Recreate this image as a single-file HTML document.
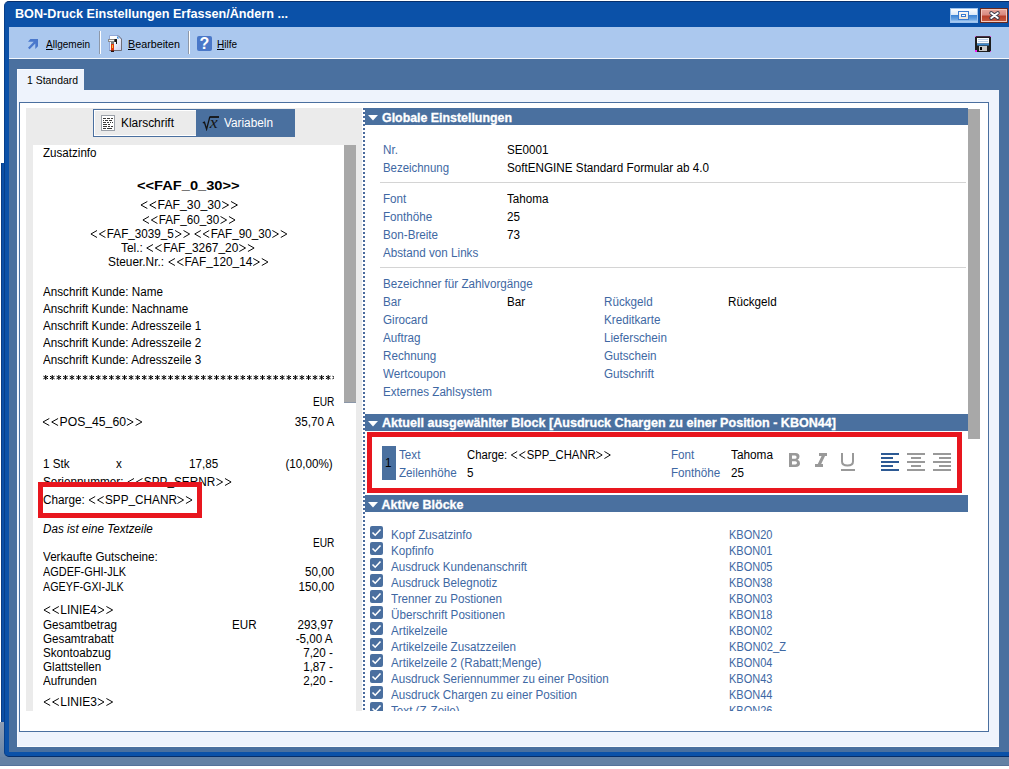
<!DOCTYPE html>
<html><head><meta charset="utf-8">
<style>
*{margin:0;padding:0;box-sizing:border-box}
html,body{width:1009px;height:769px;overflow:hidden;background:#fff;position:relative;font-family:"Liberation Sans",sans-serif;font-size:11px;color:#000}
.a{position:absolute}
.t{position:absolute;white-space:pre;line-height:14px}
.br{vertical-align:baseline;display:inline}
.us{position:relative;top:-1px}
u{text-decoration:underline;text-underline-offset:1px}
.cb{position:absolute;left:370px;width:13px;height:13px;background:#4a6f9f;border-radius:2px}
.cb svg{position:absolute;left:0;top:0}
</style></head><body>
<!-- background window pieces -->
<div class="a" style="left:0;top:722px;width:12px;height:36px;background:linear-gradient(#8e9eb4,#6884a6)"></div>
<div class="a" style="left:0;top:757px;width:1009px;height:9px;background:#6481a4"></div>
<div class="a" style="left:0;top:765px;width:1009px;height:1px;background:#56739a"></div>
<div class="a" style="left:1px;top:163px;width:4px;height:559px;background:#0b4fa6;border-left:1px solid #083c84"></div>

<!-- main window frame -->
<div class="a" style="left:4px;top:1px;width:1010px;height:756px;background:#0b51a8;border-radius:5px 0 0 5px;border-left:1px solid #073f8a;border-top:1px solid #062f6c;border-bottom:1px solid #062e6a"></div>

<!-- title buttons -->
<div class="a" style="left:950px;top:8px;width:28px;height:15px;border:1px solid #9cc2ee;background:linear-gradient(#fdfeff 0,#dce9f8 45%,#3f86d6 50%,#6aa4e2 80%,#b4d2f4 100%)"></div>
<div class="a" style="left:958px;top:11px;width:11px;height:9px;border:1px solid #3a7ad0;background:linear-gradient(#f8f8f8,#ece4d8)"></div>
<div class="a" style="left:961px;top:14px;width:5px;height:3px;border:1px solid #3a7ad0;background:#fff"></div>
<div class="a" style="left:980px;top:8px;width:28px;height:15px;border:1px solid #6a2a1e;background:linear-gradient(#e8a89c 0,#d88a80 45%,#b8402a 55%,#c85c40 100%);box-shadow:inset 0 0 0 1px #f4c8bc"></div>
<svg class="a" style="left:988px;top:10px" width="13" height="11" viewBox="0 0 13 11"><path d="M3.2 3 L9.8 8 M9.8 3 L3.2 8" stroke="#3a3a4a" stroke-width="3.8" stroke-linecap="round"/><path d="M3.2 3 L9.8 8 M9.8 3 L3.2 8" stroke="#fff" stroke-width="2" stroke-linecap="round"/></svg>

<!-- toolbar -->
<div class="a" style="left:9px;top:27px;width:1000px;height:31px;background:#abc8ee"></div>
<div class="a" style="left:9px;top:58px;width:1000px;height:1px;background:#f4f8fd"></div>
<svg class="a" style="left:27px;top:38px" width="12" height="12" viewBox="0 0 12 12"><path d="M3.4 1 L11 1 L11 8.3 L8.3 11 L8.3 5.6 L2.6 11.3 L1 9.7 L6.7 3.7 L1 3.7 Z" fill="#4a78cc"/></svg>
<div class="a" style="left:99px;top:31px;width:1px;height:23px;background:#8e98a8"></div>
<div class="a" style="left:100px;top:31px;width:1px;height:23px;background:#fff"></div>
<div class="a" style="left:188px;top:31px;width:1px;height:23px;background:#8e98a8"></div>
<div class="a" style="left:189px;top:31px;width:1px;height:23px;background:#fff"></div>
<!-- bearbeiten icon -->
<svg class="a" style="left:107px;top:34px" width="17" height="19" viewBox="0 0 17 19">
<defs><linearGradient id="dg" x1="0" y1="0" x2="1" y2="1"><stop offset="0.3" stop-color="#fff"/><stop offset="1" stop-color="#c4cdf0"/></linearGradient></defs>
<path d="M2.5 1.5 H11 L14.5 5 V16.5 H2.5 Z" fill="url(#dg)" stroke="#90a8d8"/>
<path d="M11 1.5 L14.5 5 V16.5 H2.5" fill="none" stroke="#6e6e78"/>
<path d="M10 2 L12.5 4.5 H10 Z" fill="#3a90e0"/>
<rect x="1" y="5" width="9" height="3" fill="#8a8a8a"/><rect x="2" y="6" width="5" height="1" fill="#f4f4f4"/>
<rect x="4" y="8" width="3" height="2" fill="#7a7a7a"/>
<path d="M7.5 5 H10 V10 H9 V8 H7.5 Z" fill="#151515"/>
<rect x="4" y="10" width="3" height="7" fill="#e2380e"/><rect x="5" y="11" width="1" height="3" fill="#f2c43a"/>
<rect x="4" y="16.5" width="3" height="1.5" fill="#201010"/>
</svg>
<!-- help icon -->
<div class="a" style="left:197px;top:36px;width:15px;height:15px;background:#4a78c8;border-radius:2px"></div>
<div class="a" style="left:197px;top:36px;width:15px;text-align:center;color:#fff;font:bold 16px/16px 'Liberation Sans',sans-serif">?</div>
<!-- save icon -->
<svg class="a" style="left:975px;top:36px" width="16" height="16" viewBox="0 0 16 16">
<rect x="0" y="0" width="16" height="16" fill="#1e1e1e"/>
<rect x="0" y="0" width="16" height="1" fill="#4a3048"/>
<rect x="2" y="2" width="12" height="5.5" fill="#fafcff"/>
<rect x="3" y="3" width="10" height="1" fill="#b8cfe8"/><rect x="3" y="5" width="10" height="1" fill="#b8cfe8"/>
<rect x="2" y="7.5" width="12" height="2" fill="#3c8ad0"/>
<rect x="4" y="10" width="8" height="5" fill="#c8c8c8"/>
<rect x="5" y="11" width="2" height="3" fill="#000"/>
<rect x="0" y="0" width="1" height="1" fill="#e040e0"/><rect x="15" y="0" width="1" height="1" fill="#e040e0"/><rect x="0" y="14" width="2" height="2" fill="#f020f0"/><rect x="15" y="15" width="1" height="1" fill="#e040e0"/>
</svg>

<!-- steel client -->
<div class="a" style="left:9px;top:59px;width:1000px;height:693px;background:#4a709f"></div>

<!-- tab -->
<div class="a" style="left:17px;top:69px;width:67px;height:22px;background:#eef3fc;border-top:1px solid #f8fbff;border-left:1px solid #f6f9ff"></div>
<!-- light page -->
<div class="a" style="left:17px;top:90px;width:982px;height:657px;background:#eef3fc;border-left:1px solid #f6f9ff"></div>
<div class="a" style="left:17px;top:746px;width:982px;height:1px;background:#fbfdff"></div>
<!-- inner bordered white box -->
<div class="a" style="left:19px;top:102px;width:970px;height:630px;background:#fff;border:1px solid #4a6f9f"></div>

<!-- left gray panel -->
<div class="a" style="left:26px;top:108px;width:336px;height:603px;background:#ebebeb"></div>
<div class="a" style="left:33px;top:145px;width:323px;height:566px;background:#fff"></div>
<div class="a" style="left:344px;top:145px;width:12px;height:258px;background:#a8a8a8;border-bottom:1px solid #8a96a8"></div>

<!-- klarschrift / variabeln buttons -->
<div class="a" style="left:93px;top:109px;width:103px;height:28px;border:1px solid #4a6f9f;border-right:none;box-shadow:inset 1px 1px 0 #fff, inset 0 -1px 0 #fff;background:#ebebeb"></div>
<div class="a" style="left:196px;top:109px;width:99px;height:28px;background:#4a709f"></div>
<svg class="a" style="left:101px;top:115px" width="14" height="16" viewBox="0 0 14 16">
<rect x="0.5" y="0.5" width="13" height="15" fill="#fff" stroke="#9aa0a8"/>
<g fill="#3a3a3a"><rect x="2" y="3" width="3" height="1"/><rect x="6" y="3" width="3" height="1"/><rect x="10" y="3" width="2" height="1"/>
<rect x="2" y="5" width="1" height="1"/><rect x="4" y="5" width="3" height="1"/><rect x="8" y="5" width="3" height="1"/>
<rect x="2" y="7" width="3" height="1"/><rect x="6" y="7" width="2" height="1"/><rect x="9" y="7" width="1" height="1"/><rect x="11" y="7" width="1" height="1"/>
<rect x="2" y="9" width="4" height="1"/><rect x="7" y="9" width="2" height="1"/>
<rect x="2" y="11" width="4" height="1"/><rect x="7" y="11" width="2" height="1"/><rect x="10" y="11" width="2" height="1"/>
<rect x="2" y="13" width="3" height="1"/><rect x="6" y="13" width="5" height="1"/></g>
</svg>
<svg class="a" style="left:202px;top:114px" width="18" height="17" viewBox="0 0 18 17">
<path d="M0.8 8.8 L2.4 8.2 L4.6 15.2 L7.8 2.8" fill="none" stroke="#141414" stroke-width="1.3"/>
<path d="M7.6 3 H17" fill="none" stroke="#141414" stroke-width="1.8"/>
<text x="7.2" y="14.2" font-family="Liberation Serif" font-style="italic" font-size="16.5" fill="#141414" transform="scale(1.08,1)">x</text>
</svg>

<!-- splitter -->
<div class="a" style="left:363px;top:108px;width:2px;height:603px;background:repeating-linear-gradient(#4a6a9c 0 2px,transparent 2px 4px)"></div>

<!-- right panel headers -->
<div class="a" style="left:365px;top:108px;width:603px;height:17px;background:#4a709f"></div>
<div class="a" style="left:365px;top:414px;width:603px;height:17px;background:#4a709f"></div>
<div class="a" style="left:365px;top:495px;width:603px;height:17px;background:#4a709f"></div>
<svg class="a" style="left:368px;top:115px" width="11" height="6"><path d="M0 0 H10 L5 5.5 Z" fill="#fff"/></svg>
<svg class="a" style="left:368px;top:421px" width="11" height="6"><path d="M0 0 H10 L5 5.5 Z" fill="#fff"/></svg>
<svg class="a" style="left:368px;top:502px" width="11" height="6"><path d="M0 0 H10 L5 5.5 Z" fill="#fff"/></svg>
<div class="a" style="left:968px;top:109px;width:12px;height:330px;background:#a8a8a8"></div>
<!-- separators -->
<div class="a" style="left:380px;top:182px;width:586px;height:1px;background:#d4d4d4"></div>
<div class="a" style="left:380px;top:267px;width:586px;height:1px;background:#d4d4d4"></div>

<!-- red boxes -->
<div class="a" style="left:367px;top:432px;width:595px;height:61px;border:5px solid #e8161e"></div>
<div class="a" style="left:382px;top:446px;width:14px;height:34px;background:#4a709f"></div>
<!-- B I U -->
<svg class="a" style="left:786px;top:450px" width="72" height="24" viewBox="0 0 72 24" fill="#999">
<path d="M3 3 H9.5 Q13.5 3 13.5 6.5 Q13.5 8.8 11.5 9.7 Q14 10.5 14 13.2 Q14 17 9.5 17 H3 Z M6 5.6 V8.8 H9 Q10.6 8.8 10.6 7.2 Q10.6 5.6 9 5.6 Z M6 11.2 V14.4 H9.3 Q11 14.4 11 12.8 Q11 11.2 9.3 11.2 Z" fill-rule="evenodd"/>
<path d="M33 3 H41 V6 H39 L35.2 14 H37 V17 H29 V14 H31.8 L35.6 6 H33 Z"/>
<path d="M56 3 V11.5 Q56 15.5 61.5 15.5 Q67 15.5 67 11.5 V3" fill="none" stroke="#999" stroke-width="2"/>
<rect x="55" y="19" width="14" height="2"/>
</svg>
<svg class="a" style="left:880px;top:452px" width="72" height="20" viewBox="0 0 72 20">
<g fill="#2d5a94"><rect x="1" y="1" width="18" height="2"/><rect x="1" y="5" width="12" height="2"/><rect x="1" y="9" width="18" height="2"/><rect x="1" y="13" width="12" height="2"/><rect x="1" y="17" width="18" height="2"/></g>
<g fill="#999"><rect x="27" y="1" width="18" height="2"/><rect x="31" y="5" width="10" height="2"/><rect x="27" y="9" width="18" height="2"/><rect x="31" y="13" width="10" height="2"/><rect x="27" y="17" width="18" height="2"/>
<rect x="53" y="1" width="18" height="2"/><rect x="59" y="5" width="12" height="2"/><rect x="53" y="9" width="18" height="2"/><rect x="59" y="13" width="12" height="2"/><rect x="53" y="17" width="18" height="2"/></g>
</svg>

<!-- checkboxes -->
<div class="a" style="left:365px;top:512px;width:603px;height:199px;overflow:hidden">
<div class="cb" style="left:5px;top:14px"><svg width="13" height="13"><path d="M2.5 6.5 L5.2 9.2 L10.5 3.5" fill="none" stroke="#fff" stroke-width="1.6"/></svg></div>
<div class="cb" style="left:5px;top:30px"><svg width="13" height="13"><path d="M2.5 6.5 L5.2 9.2 L10.5 3.5" fill="none" stroke="#fff" stroke-width="1.6"/></svg></div>
<div class="cb" style="left:5px;top:46px"><svg width="13" height="13"><path d="M2.5 6.5 L5.2 9.2 L10.5 3.5" fill="none" stroke="#fff" stroke-width="1.6"/></svg></div>
<div class="cb" style="left:5px;top:62px"><svg width="13" height="13"><path d="M2.5 6.5 L5.2 9.2 L10.5 3.5" fill="none" stroke="#fff" stroke-width="1.6"/></svg></div>
<div class="cb" style="left:5px;top:78px"><svg width="13" height="13"><path d="M2.5 6.5 L5.2 9.2 L10.5 3.5" fill="none" stroke="#fff" stroke-width="1.6"/></svg></div>
<div class="cb" style="left:5px;top:94px"><svg width="13" height="13"><path d="M2.5 6.5 L5.2 9.2 L10.5 3.5" fill="none" stroke="#fff" stroke-width="1.6"/></svg></div>
<div class="cb" style="left:5px;top:110px"><svg width="13" height="13"><path d="M2.5 6.5 L5.2 9.2 L10.5 3.5" fill="none" stroke="#fff" stroke-width="1.6"/></svg></div>
<div class="cb" style="left:5px;top:126px"><svg width="13" height="13"><path d="M2.5 6.5 L5.2 9.2 L10.5 3.5" fill="none" stroke="#fff" stroke-width="1.6"/></svg></div>
<div class="cb" style="left:5px;top:142px"><svg width="13" height="13"><path d="M2.5 6.5 L5.2 9.2 L10.5 3.5" fill="none" stroke="#fff" stroke-width="1.6"/></svg></div>
<div class="cb" style="left:5px;top:158px"><svg width="13" height="13"><path d="M2.5 6.5 L5.2 9.2 L10.5 3.5" fill="none" stroke="#fff" stroke-width="1.6"/></svg></div>
<div class="cb" style="left:5px;top:174px"><svg width="13" height="13"><path d="M2.5 6.5 L5.2 9.2 L10.5 3.5" fill="none" stroke="#fff" stroke-width="1.6"/></svg></div>
<div class="cb" style="left:5px;top:190px"><svg width="13" height="13"><path d="M2.5 6.5 L5.2 9.2 L10.5 3.5" fill="none" stroke="#fff" stroke-width="1.6"/></svg></div>
</div>

<svg class="a" style="left:0;top:0" width="334" height="400"><path d="M45.70 375 V380 M43.40 376.2 L48.00 378.8 M43.40 378.8 L48.00 376.2 M52.27 375 V380 M49.97 376.2 L54.57 378.8 M49.97 378.8 L54.57 376.2 M58.84 375 V380 M56.54 376.2 L61.14 378.8 M56.54 378.8 L61.14 376.2 M65.41 375 V380 M63.11 376.2 L67.71 378.8 M63.11 378.8 L67.71 376.2 M71.98 375 V380 M69.68 376.2 L74.28 378.8 M69.68 378.8 L74.28 376.2 M78.55 375 V380 M76.25 376.2 L80.85 378.8 M76.25 378.8 L80.85 376.2 M85.12 375 V380 M82.82 376.2 L87.42 378.8 M82.82 378.8 L87.42 376.2 M91.69 375 V380 M89.39 376.2 L93.99 378.8 M89.39 378.8 L93.99 376.2 M98.26 375 V380 M95.96 376.2 L100.56 378.8 M95.96 378.8 L100.56 376.2 M104.83 375 V380 M102.53 376.2 L107.13 378.8 M102.53 378.8 L107.13 376.2 M111.40 375 V380 M109.10 376.2 L113.70 378.8 M109.10 378.8 L113.70 376.2 M117.97 375 V380 M115.67 376.2 L120.27 378.8 M115.67 378.8 L120.27 376.2 M124.54 375 V380 M122.24 376.2 L126.84 378.8 M122.24 378.8 L126.84 376.2 M131.11 375 V380 M128.81 376.2 L133.41 378.8 M128.81 378.8 L133.41 376.2 M137.68 375 V380 M135.38 376.2 L139.98 378.8 M135.38 378.8 L139.98 376.2 M144.25 375 V380 M141.95 376.2 L146.55 378.8 M141.95 378.8 L146.55 376.2 M150.82 375 V380 M148.52 376.2 L153.12 378.8 M148.52 378.8 L153.12 376.2 M157.39 375 V380 M155.09 376.2 L159.69 378.8 M155.09 378.8 L159.69 376.2 M163.96 375 V380 M161.66 376.2 L166.26 378.8 M161.66 378.8 L166.26 376.2 M170.53 375 V380 M168.23 376.2 L172.83 378.8 M168.23 378.8 L172.83 376.2 M177.10 375 V380 M174.80 376.2 L179.40 378.8 M174.80 378.8 L179.40 376.2 M183.67 375 V380 M181.37 376.2 L185.97 378.8 M181.37 378.8 L185.97 376.2 M190.24 375 V380 M187.94 376.2 L192.54 378.8 M187.94 378.8 L192.54 376.2 M196.81 375 V380 M194.51 376.2 L199.11 378.8 M194.51 378.8 L199.11 376.2 M203.38 375 V380 M201.08 376.2 L205.68 378.8 M201.08 378.8 L205.68 376.2 M209.95 375 V380 M207.65 376.2 L212.25 378.8 M207.65 378.8 L212.25 376.2 M216.52 375 V380 M214.22 376.2 L218.82 378.8 M214.22 378.8 L218.82 376.2 M223.09 375 V380 M220.79 376.2 L225.39 378.8 M220.79 378.8 L225.39 376.2 M229.66 375 V380 M227.36 376.2 L231.96 378.8 M227.36 378.8 L231.96 376.2 M236.23 375 V380 M233.93 376.2 L238.53 378.8 M233.93 378.8 L238.53 376.2 M242.80 375 V380 M240.50 376.2 L245.10 378.8 M240.50 378.8 L245.10 376.2 M249.37 375 V380 M247.07 376.2 L251.67 378.8 M247.07 378.8 L251.67 376.2 M255.94 375 V380 M253.64 376.2 L258.24 378.8 M253.64 378.8 L258.24 376.2 M262.51 375 V380 M260.21 376.2 L264.81 378.8 M260.21 378.8 L264.81 376.2 M269.08 375 V380 M266.78 376.2 L271.38 378.8 M266.78 378.8 L271.38 376.2 M275.65 375 V380 M273.35 376.2 L277.95 378.8 M273.35 378.8 L277.95 376.2 M282.22 375 V380 M279.92 376.2 L284.52 378.8 M279.92 378.8 L284.52 376.2 M288.79 375 V380 M286.49 376.2 L291.09 378.8 M286.49 378.8 L291.09 376.2 M295.36 375 V380 M293.06 376.2 L297.66 378.8 M293.06 378.8 L297.66 376.2 M301.93 375 V380 M299.63 376.2 L304.23 378.8 M299.63 378.8 L304.23 376.2 M308.50 375 V380 M306.20 376.2 L310.80 378.8 M306.20 378.8 L310.80 376.2 M315.07 375 V380 M312.77 376.2 L317.37 378.8 M312.77 378.8 L317.37 376.2 M321.64 375 V380 M319.34 376.2 L323.94 378.8 M319.34 378.8 L323.94 376.2 M328.21 375 V380 M325.91 376.2 L330.51 378.8 M325.91 378.8 L330.51 376.2 M334.78 375 V380 M332.48 376.2 L337.08 378.8 M332.48 378.8 L337.08 376.2" stroke="#000" stroke-width="1" fill="none"/></svg>
<div class="t" id="t0" style="top:6.5px;font:bold 13px/14px 'Liberation Sans',sans-serif;color:#fff;left:15px;transform:scaleX(0.9715);transform-origin:left top;">BON-Druck Einstellungen Erfassen/Ändern ...</div>
<div class="t" id="t1" style="top:37px;font:11px/14px 'Liberation Sans',sans-serif;color:#000;left:46px;transform:scaleX(0.9107);transform-origin:left top;"><u>A</u>llgemein</div>
<div class="t" id="t2" style="top:37px;font:11px/14px 'Liberation Sans',sans-serif;color:#000;left:127.5px;transform:scaleX(0.9771);transform-origin:left top;"><u>B</u>earbeiten</div>
<div class="t" id="t3" style="top:37px;font:11px/14px 'Liberation Sans',sans-serif;color:#000;left:217px;transform:scaleX(0.9084);transform-origin:left top;"><u>H</u>ilfe</div>
<div class="t" id="t4" style="top:73px;font:11px/14px 'Liberation Sans',sans-serif;color:#000;left:27px;transform:scaleX(0.9475);transform-origin:left top;">1 Standard</div>
<div class="t" id="t5" style="top:116px;font:12.5px/14px 'Liberation Sans',sans-serif;color:#000;left:121px;transform:scaleX(0.9536);transform-origin:left top;">Klarschrift</div>
<div class="t" id="t6" style="top:116px;font:12.5px/14px 'Liberation Sans',sans-serif;color:#fff;left:224px;transform:scaleX(0.9443);transform-origin:left top;">Variabeln</div>
<div class="t" id="t7" style="top:146px;font:12.5px/14px 'Liberation Sans',sans-serif;color:#000;left:43px;transform:scaleX(0.9277);transform-origin:left top;">Zusatzinfo</div>
<div class="t" id="t8" style="top:179px;font:bold 12.5px/14px 'Liberation Sans',sans-serif;color:#000;left:137px;transform:scaleX(1.1713);transform-origin:left top;">&lt;&lt;FAF<span class="us">_</span>0<span class="us">_</span>30&gt;&gt;</div>
<div class="t" id="t9" style="top:198px;font:12.5px/14px 'Liberation Sans',sans-serif;color:#000;left:139.6px;transform:scaleX(0.9787);transform-origin:left top;"><svg class="br" width="9" height="9"><path d="M7.5 1.5 L1 5 L7.5 8.5" fill="none" stroke="currentColor" stroke-width="1"/></svg><svg class="br" width="9" height="9"><path d="M7.5 1.5 L1 5 L7.5 8.5" fill="none" stroke="currentColor" stroke-width="1"/></svg>FAF<span class="us">_</span>30<span class="us">_</span>30<svg class="br" width="9" height="9"><path d="M1 1.5 L7.5 5 L1 8.5" fill="none" stroke="currentColor" stroke-width="1"/></svg><svg class="br" width="9" height="9"><path d="M1 1.5 L7.5 5 L1 8.5" fill="none" stroke="currentColor" stroke-width="1"/></svg></div>
<div class="t" id="t10" style="top:213px;font:12.5px/14px 'Liberation Sans',sans-serif;color:#000;left:141.8px;transform:scaleX(0.9350);transform-origin:left top;"><svg class="br" width="9" height="9"><path d="M7.5 1.5 L1 5 L7.5 8.5" fill="none" stroke="currentColor" stroke-width="1"/></svg><svg class="br" width="9" height="9"><path d="M7.5 1.5 L1 5 L7.5 8.5" fill="none" stroke="currentColor" stroke-width="1"/></svg>FAF<span class="us">_</span>60<span class="us">_</span>30<svg class="br" width="9" height="9"><path d="M1 1.5 L7.5 5 L1 8.5" fill="none" stroke="currentColor" stroke-width="1"/></svg><svg class="br" width="9" height="9"><path d="M1 1.5 L7.5 5 L1 8.5" fill="none" stroke="currentColor" stroke-width="1"/></svg></div>
<div class="t" id="t11" style="top:227px;font:12.5px/14px 'Liberation Sans',sans-serif;color:#000;left:89.5px;transform:scaleX(0.9352);transform-origin:left top;"><svg class="br" width="9" height="9"><path d="M7.5 1.5 L1 5 L7.5 8.5" fill="none" stroke="currentColor" stroke-width="1"/></svg><svg class="br" width="9" height="9"><path d="M7.5 1.5 L1 5 L7.5 8.5" fill="none" stroke="currentColor" stroke-width="1"/></svg>FAF<span class="us">_</span>3039<span class="us">_</span>5<svg class="br" width="9" height="9"><path d="M1 1.5 L7.5 5 L1 8.5" fill="none" stroke="currentColor" stroke-width="1"/></svg><svg class="br" width="9" height="9"><path d="M1 1.5 L7.5 5 L1 8.5" fill="none" stroke="currentColor" stroke-width="1"/></svg> <svg class="br" width="9" height="9"><path d="M7.5 1.5 L1 5 L7.5 8.5" fill="none" stroke="currentColor" stroke-width="1"/></svg><svg class="br" width="9" height="9"><path d="M7.5 1.5 L1 5 L7.5 8.5" fill="none" stroke="currentColor" stroke-width="1"/></svg>FAF<span class="us">_</span>90<span class="us">_</span>30<svg class="br" width="9" height="9"><path d="M1 1.5 L7.5 5 L1 8.5" fill="none" stroke="currentColor" stroke-width="1"/></svg><svg class="br" width="9" height="9"><path d="M1 1.5 L7.5 5 L1 8.5" fill="none" stroke="currentColor" stroke-width="1"/></svg></div>
<div class="t" id="t12" style="top:241px;font:12.5px/14px 'Liberation Sans',sans-serif;color:#000;left:121.4px;transform:scaleX(0.9542);transform-origin:left top;">Tel.: <svg class="br" width="9" height="9"><path d="M7.5 1.5 L1 5 L7.5 8.5" fill="none" stroke="currentColor" stroke-width="1"/></svg><svg class="br" width="9" height="9"><path d="M7.5 1.5 L1 5 L7.5 8.5" fill="none" stroke="currentColor" stroke-width="1"/></svg>FAF<span class="us">_</span>3267<span class="us">_</span>20<svg class="br" width="9" height="9"><path d="M1 1.5 L7.5 5 L1 8.5" fill="none" stroke="currentColor" stroke-width="1"/></svg><svg class="br" width="9" height="9"><path d="M1 1.5 L7.5 5 L1 8.5" fill="none" stroke="currentColor" stroke-width="1"/></svg></div>
<div class="t" id="t13" style="top:255px;font:12.5px/14px 'Liberation Sans',sans-serif;color:#000;left:108px;transform:scaleX(0.9493);transform-origin:left top;">Steuer.Nr.: <svg class="br" width="9" height="9"><path d="M7.5 1.5 L1 5 L7.5 8.5" fill="none" stroke="currentColor" stroke-width="1"/></svg><svg class="br" width="9" height="9"><path d="M7.5 1.5 L1 5 L7.5 8.5" fill="none" stroke="currentColor" stroke-width="1"/></svg>FAF<span class="us">_</span>120<span class="us">_</span>14<svg class="br" width="9" height="9"><path d="M1 1.5 L7.5 5 L1 8.5" fill="none" stroke="currentColor" stroke-width="1"/></svg><svg class="br" width="9" height="9"><path d="M1 1.5 L7.5 5 L1 8.5" fill="none" stroke="currentColor" stroke-width="1"/></svg></div>
<div class="t" id="t14" style="top:285px;font:12.5px/14px 'Liberation Sans',sans-serif;color:#000;left:43px;transform:scaleX(0.9328);transform-origin:left top;">Anschrift Kunde: Name</div>
<div class="t" id="t15" style="top:302px;font:12.5px/14px 'Liberation Sans',sans-serif;color:#000;left:43px;transform:scaleX(0.9328);transform-origin:left top;">Anschrift Kunde: Nachname</div>
<div class="t" id="t16" style="top:319px;font:12.5px/14px 'Liberation Sans',sans-serif;color:#000;left:43px;transform:scaleX(0.9328);transform-origin:left top;">Anschrift Kunde: Adresszeile 1</div>
<div class="t" id="t17" style="top:336px;font:12.5px/14px 'Liberation Sans',sans-serif;color:#000;left:43px;transform:scaleX(0.9328);transform-origin:left top;">Anschrift Kunde: Adresszeile 2</div>
<div class="t" id="t18" style="top:353px;font:12.5px/14px 'Liberation Sans',sans-serif;color:#000;left:43px;transform:scaleX(0.9328);transform-origin:left top;">Anschrift Kunde: Adresszeile 3</div>
<div class="t" id="t19" style="top:395px;font:12.5px/14px 'Liberation Sans',sans-serif;color:#000;right:675px;transform:scaleX(0.8142);transform-origin:right top;">EUR</div>
<div class="t" id="t20" style="top:415px;font:12.5px/14px 'Liberation Sans',sans-serif;color:#000;left:42px;transform:scaleX(0.9748);transform-origin:left top;"><svg class="br" width="9" height="9"><path d="M7.5 1.5 L1 5 L7.5 8.5" fill="none" stroke="currentColor" stroke-width="1"/></svg><svg class="br" width="9" height="9"><path d="M7.5 1.5 L1 5 L7.5 8.5" fill="none" stroke="currentColor" stroke-width="1"/></svg>POS<span class="us">_</span>45<span class="us">_</span>60<svg class="br" width="9" height="9"><path d="M1 1.5 L7.5 5 L1 8.5" fill="none" stroke="currentColor" stroke-width="1"/></svg><svg class="br" width="9" height="9"><path d="M1 1.5 L7.5 5 L1 8.5" fill="none" stroke="currentColor" stroke-width="1"/></svg></div>
<div class="t" id="t21" style="top:415px;font:12.5px/14px 'Liberation Sans',sans-serif;color:#000;right:675px;transform:scaleX(0.9328);transform-origin:right top;">35,70 A</div>
<div class="t" id="t22" style="top:457px;font:12.5px/14px 'Liberation Sans',sans-serif;color:#000;left:43px;transform:scaleX(0.9328);transform-origin:left top;">1 Stk</div>
<div class="t" id="t23" style="top:457px;font:12.5px/14px 'Liberation Sans',sans-serif;color:#000;left:116px;transform:scaleX(0.9328);transform-origin:left top;">x</div>
<div class="t" id="t24" style="top:457px;font:12.5px/14px 'Liberation Sans',sans-serif;color:#000;left:189px;transform:scaleX(0.9328);transform-origin:left top;">17,85</div>
<div class="t" id="t25" style="top:457px;font:12.5px/14px 'Liberation Sans',sans-serif;color:#000;right:676px;transform:scaleX(0.9328);transform-origin:right top;">(10,00%)</div>
<div class="t" id="t26" style="top:475px;font:12.5px/14px 'Liberation Sans',sans-serif;color:#000;left:43px;transform:scaleX(0.9429);transform-origin:left top;">Seriennummer: <svg class="br" width="9" height="9"><path d="M7.5 1.5 L1 5 L7.5 8.5" fill="none" stroke="currentColor" stroke-width="1"/></svg><svg class="br" width="9" height="9"><path d="M7.5 1.5 L1 5 L7.5 8.5" fill="none" stroke="currentColor" stroke-width="1"/></svg>SPP<span class="us">_</span>SERNR<svg class="br" width="9" height="9"><path d="M1 1.5 L7.5 5 L1 8.5" fill="none" stroke="currentColor" stroke-width="1"/></svg><svg class="br" width="9" height="9"><path d="M1 1.5 L7.5 5 L1 8.5" fill="none" stroke="currentColor" stroke-width="1"/></svg></div>
<div class="t" id="t27" style="top:493px;font:12.5px/14px 'Liberation Sans',sans-serif;color:#000;left:43.4px;transform:scaleX(0.9403);transform-origin:left top;">Charge: <svg class="br" width="9" height="9"><path d="M7.5 1.5 L1 5 L7.5 8.5" fill="none" stroke="currentColor" stroke-width="1"/></svg><svg class="br" width="9" height="9"><path d="M7.5 1.5 L1 5 L7.5 8.5" fill="none" stroke="currentColor" stroke-width="1"/></svg>SPP<span class="us">_</span>CHANR<svg class="br" width="9" height="9"><path d="M1 1.5 L7.5 5 L1 8.5" fill="none" stroke="currentColor" stroke-width="1"/></svg><svg class="br" width="9" height="9"><path d="M1 1.5 L7.5 5 L1 8.5" fill="none" stroke="currentColor" stroke-width="1"/></svg></div>
<div class="t" id="t28" style="top:522px;font:italic 12.5px/14px 'Liberation Sans',sans-serif;color:#000;left:43px;transform:scaleX(0.9328);transform-origin:left top;">Das ist eine Textzeile</div>
<div class="t" id="t29" style="top:536px;font:12.5px/14px 'Liberation Sans',sans-serif;color:#000;right:675px;transform:scaleX(0.8142);transform-origin:right top;">EUR</div>
<div class="t" id="t30" style="top:550px;font:12.5px/14px 'Liberation Sans',sans-serif;color:#000;left:43px;transform:scaleX(0.9328);transform-origin:left top;">Verkaufte Gutscheine:</div>
<div class="t" id="t31" style="top:565px;font:12.5px/14px 'Liberation Sans',sans-serif;color:#000;left:43px;transform:scaleX(0.8722);transform-origin:left top;">AGDEF-GHI-JLK</div>
<div class="t" id="t32" style="top:565px;font:12.5px/14px 'Liberation Sans',sans-serif;color:#000;right:675px;transform:scaleX(0.9328);transform-origin:right top;">50,00</div>
<div class="t" id="t33" style="top:580px;font:12.5px/14px 'Liberation Sans',sans-serif;color:#000;left:43px;transform:scaleX(0.8605);transform-origin:left top;">AGEYF-GXI-JLK</div>
<div class="t" id="t34" style="top:580px;font:12.5px/14px 'Liberation Sans',sans-serif;color:#000;right:675px;transform:scaleX(0.9328);transform-origin:right top;">150,00</div>
<div class="t" id="t35" style="top:603px;font:12.5px/14px 'Liberation Sans',sans-serif;color:#000;left:43px;transform:scaleX(0.9606);transform-origin:left top;"><svg class="br" width="9" height="9"><path d="M7.5 1.5 L1 5 L7.5 8.5" fill="none" stroke="currentColor" stroke-width="1"/></svg><svg class="br" width="9" height="9"><path d="M7.5 1.5 L1 5 L7.5 8.5" fill="none" stroke="currentColor" stroke-width="1"/></svg>LINIE4<svg class="br" width="9" height="9"><path d="M1 1.5 L7.5 5 L1 8.5" fill="none" stroke="currentColor" stroke-width="1"/></svg><svg class="br" width="9" height="9"><path d="M1 1.5 L7.5 5 L1 8.5" fill="none" stroke="currentColor" stroke-width="1"/></svg></div>
<div class="t" id="t36" style="top:618px;font:12.5px/14px 'Liberation Sans',sans-serif;color:#000;left:43px;transform:scaleX(0.9328);transform-origin:left top;">Gesamtbetrag</div>
<div class="t" id="t37" style="top:618px;font:12.5px/14px 'Liberation Sans',sans-serif;color:#000;left:232px;transform:scaleX(0.9328);transform-origin:left top;">EUR</div>
<div class="t" id="t38" style="top:618px;font:12.5px/14px 'Liberation Sans',sans-serif;color:#000;right:676px;transform:scaleX(0.9328);transform-origin:right top;">293,97</div>
<div class="t" id="t39" style="top:632px;font:12.5px/14px 'Liberation Sans',sans-serif;color:#000;left:43px;transform:scaleX(0.9328);transform-origin:left top;">Gesamtrabatt</div>
<div class="t" id="t40" style="top:632px;font:12.5px/14px 'Liberation Sans',sans-serif;color:#000;right:676px;transform:scaleX(0.9328);transform-origin:right top;">-5,00 A</div>
<div class="t" id="t41" style="top:646px;font:12.5px/14px 'Liberation Sans',sans-serif;color:#000;left:43px;transform:scaleX(0.9328);transform-origin:left top;">Skontoabzug</div>
<div class="t" id="t42" style="top:646px;font:12.5px/14px 'Liberation Sans',sans-serif;color:#000;right:676px;transform:scaleX(0.9328);transform-origin:right top;">7,20 -</div>
<div class="t" id="t43" style="top:660px;font:12.5px/14px 'Liberation Sans',sans-serif;color:#000;left:43px;transform:scaleX(0.9328);transform-origin:left top;">Glattstellen</div>
<div class="t" id="t44" style="top:660px;font:12.5px/14px 'Liberation Sans',sans-serif;color:#000;right:676px;transform:scaleX(0.9328);transform-origin:right top;">1,87 -</div>
<div class="t" id="t45" style="top:674px;font:12.5px/14px 'Liberation Sans',sans-serif;color:#000;left:43px;transform:scaleX(0.9328);transform-origin:left top;">Aufrunden</div>
<div class="t" id="t46" style="top:674px;font:12.5px/14px 'Liberation Sans',sans-serif;color:#000;right:676px;transform:scaleX(0.9328);transform-origin:right top;">2,20 -</div>
<div class="t" id="t47" style="top:695px;font:12.5px/14px 'Liberation Sans',sans-serif;color:#000;left:43px;transform:scaleX(0.9606);transform-origin:left top;"><svg class="br" width="9" height="9"><path d="M7.5 1.5 L1 5 L7.5 8.5" fill="none" stroke="currentColor" stroke-width="1"/></svg><svg class="br" width="9" height="9"><path d="M7.5 1.5 L1 5 L7.5 8.5" fill="none" stroke="currentColor" stroke-width="1"/></svg>LINIE3<svg class="br" width="9" height="9"><path d="M1 1.5 L7.5 5 L1 8.5" fill="none" stroke="currentColor" stroke-width="1"/></svg><svg class="br" width="9" height="9"><path d="M1 1.5 L7.5 5 L1 8.5" fill="none" stroke="currentColor" stroke-width="1"/></svg></div>
<div class="t" id="t48" style="top:110.5px;font:bold 12.5px/14px 'Liberation Sans',sans-serif;color:#fff;-webkit-text-stroke:0.3px #fff;left:382px;transform:scaleX(0.9902);transform-origin:left top;">Globale Einstellungen</div>
<div class="t" id="t49" style="top:416px;font:bold 12.5px/14px 'Liberation Sans',sans-serif;color:#fff;-webkit-text-stroke:0.3px #fff;left:382px;transform:scaleX(1.0056);transform-origin:left top;">Aktuell ausgewählter Block [Ausdruck Chargen zu einer Position - KBON44]</div>
<div class="t" id="t50" style="top:497.5px;font:bold 12.5px/14px 'Liberation Sans',sans-serif;color:#fff;-webkit-text-stroke:0.3px #fff;left:381.5px;">Aktive Blöcke</div>
<div class="t" id="t51" style="top:143px;font:12.5px/14px 'Liberation Sans',sans-serif;color:#3e68a3;left:383px;transform:scaleX(0.9328);transform-origin:left top;">Nr.</div>
<div class="t" id="t52" style="top:143px;font:12.5px/14px 'Liberation Sans',sans-serif;color:#000;left:507px;transform:scaleX(0.9328);transform-origin:left top;">SE0001</div>
<div class="t" id="t53" style="top:161px;font:12.5px/14px 'Liberation Sans',sans-serif;color:#3e68a3;left:383px;transform:scaleX(0.9131);transform-origin:left top;">Bezeichnung</div>
<div class="t" id="t54" style="top:161px;font:12.5px/14px 'Liberation Sans',sans-serif;color:#000;left:507px;transform:scaleX(0.9348);transform-origin:left top;">SoftENGINE Standard Formular ab 4.0</div>
<div class="t" id="t55" style="top:192px;font:12.5px/14px 'Liberation Sans',sans-serif;color:#3e68a3;left:383px;transform:scaleX(0.9328);transform-origin:left top;">Font</div>
<div class="t" id="t56" style="top:192px;font:12.5px/14px 'Liberation Sans',sans-serif;color:#000;left:507px;transform:scaleX(0.9328);transform-origin:left top;">Tahoma</div>
<div class="t" id="t57" style="top:210px;font:12.5px/14px 'Liberation Sans',sans-serif;color:#3e68a3;left:383px;transform:scaleX(0.9328);transform-origin:left top;">Fonthöhe</div>
<div class="t" id="t58" style="top:210px;font:12.5px/14px 'Liberation Sans',sans-serif;color:#000;left:507px;transform:scaleX(0.9328);transform-origin:left top;">25</div>
<div class="t" id="t59" style="top:228px;font:12.5px/14px 'Liberation Sans',sans-serif;color:#3e68a3;left:383px;transform:scaleX(0.9328);transform-origin:left top;">Bon-Breite</div>
<div class="t" id="t60" style="top:228px;font:12.5px/14px 'Liberation Sans',sans-serif;color:#000;left:507px;transform:scaleX(0.9328);transform-origin:left top;">73</div>
<div class="t" id="t61" style="top:246px;font:12.5px/14px 'Liberation Sans',sans-serif;color:#3e68a3;left:383px;transform:scaleX(0.9328);transform-origin:left top;">Abstand von Links</div>
<div class="t" id="t62" style="top:276.5px;font:12.5px/14px 'Liberation Sans',sans-serif;color:#3e68a3;left:383px;transform:scaleX(0.9328);transform-origin:left top;">Bezeichner für Zahlvorgänge</div>
<div class="t" id="t63" style="top:294.5px;font:12.5px/14px 'Liberation Sans',sans-serif;color:#3e68a3;left:383px;transform:scaleX(0.9328);transform-origin:left top;">Bar</div>
<div class="t" id="t64" style="top:294.5px;font:12.5px/14px 'Liberation Sans',sans-serif;color:#000;left:507px;transform:scaleX(0.9328);transform-origin:left top;">Bar</div>
<div class="t" id="t65" style="top:294.5px;font:12.5px/14px 'Liberation Sans',sans-serif;color:#3e68a3;left:604px;transform:scaleX(0.9328);transform-origin:left top;">Rückgeld</div>
<div class="t" id="t66" style="top:294.5px;font:12.5px/14px 'Liberation Sans',sans-serif;color:#000;left:728px;transform:scaleX(0.9328);transform-origin:left top;">Rückgeld</div>
<div class="t" id="t67" style="top:312.5px;font:12.5px/14px 'Liberation Sans',sans-serif;color:#3e68a3;left:383px;transform:scaleX(0.9328);transform-origin:left top;">Girocard</div>
<div class="t" id="t68" style="top:312.5px;font:12.5px/14px 'Liberation Sans',sans-serif;color:#3e68a3;left:604px;transform:scaleX(0.9328);transform-origin:left top;">Kreditkarte</div>
<div class="t" id="t69" style="top:330.5px;font:12.5px/14px 'Liberation Sans',sans-serif;color:#3e68a3;left:383px;transform:scaleX(0.9328);transform-origin:left top;">Auftrag</div>
<div class="t" id="t70" style="top:330.5px;font:12.5px/14px 'Liberation Sans',sans-serif;color:#3e68a3;left:604px;transform:scaleX(0.9328);transform-origin:left top;">Lieferschein</div>
<div class="t" id="t71" style="top:348.5px;font:12.5px/14px 'Liberation Sans',sans-serif;color:#3e68a3;left:383px;transform:scaleX(0.9328);transform-origin:left top;">Rechnung</div>
<div class="t" id="t72" style="top:348.5px;font:12.5px/14px 'Liberation Sans',sans-serif;color:#3e68a3;left:604px;transform:scaleX(0.9328);transform-origin:left top;">Gutschein</div>
<div class="t" id="t73" style="top:366.5px;font:12.5px/14px 'Liberation Sans',sans-serif;color:#3e68a3;left:383px;transform:scaleX(0.9328);transform-origin:left top;">Wertcoupon</div>
<div class="t" id="t74" style="top:366.5px;font:12.5px/14px 'Liberation Sans',sans-serif;color:#3e68a3;left:604px;transform:scaleX(0.9328);transform-origin:left top;">Gutschrift</div>
<div class="t" id="t75" style="top:384.5px;font:12.5px/14px 'Liberation Sans',sans-serif;color:#3e68a3;left:383px;transform:scaleX(0.9328);transform-origin:left top;">Externes Zahlsystem</div>
<div class="t" id="t76" style="top:448px;font:12.5px/14px 'Liberation Sans',sans-serif;color:#3e68a3;left:399px;transform:scaleX(0.9328);transform-origin:left top;">Text</div>
<div class="t" id="t77" style="top:448px;font:12.5px/14px 'Liberation Sans',sans-serif;color:#000;left:467px;transform:scaleX(0.9041);transform-origin:left top;">Charge: <svg class="br" width="9" height="9"><path d="M7.5 1.5 L1 5 L7.5 8.5" fill="none" stroke="currentColor" stroke-width="1"/></svg><svg class="br" width="9" height="9"><path d="M7.5 1.5 L1 5 L7.5 8.5" fill="none" stroke="currentColor" stroke-width="1"/></svg>SPP<span class="us">_</span>CHANR<svg class="br" width="9" height="9"><path d="M1 1.5 L7.5 5 L1 8.5" fill="none" stroke="currentColor" stroke-width="1"/></svg><svg class="br" width="9" height="9"><path d="M1 1.5 L7.5 5 L1 8.5" fill="none" stroke="currentColor" stroke-width="1"/></svg></div>
<div class="t" id="t78" style="top:466px;font:12.5px/14px 'Liberation Sans',sans-serif;color:#3e68a3;left:399px;transform:scaleX(0.9328);transform-origin:left top;">Zeilenhöhe</div>
<div class="t" id="t79" style="top:466px;font:12.5px/14px 'Liberation Sans',sans-serif;color:#000;left:467px;transform:scaleX(0.9328);transform-origin:left top;">5</div>
<div class="t" id="t80" style="top:448px;font:12.5px/14px 'Liberation Sans',sans-serif;color:#3e68a3;left:671px;transform:scaleX(0.9328);transform-origin:left top;">Font</div>
<div class="t" id="t81" style="top:448px;font:12.5px/14px 'Liberation Sans',sans-serif;color:#000;left:731px;transform:scaleX(0.9442);transform-origin:left top;">Tahoma</div>
<div class="t" id="t82" style="top:466px;font:12.5px/14px 'Liberation Sans',sans-serif;color:#3e68a3;left:671px;transform:scaleX(0.9328);transform-origin:left top;">Fonthöhe</div>
<div class="t" id="t83" style="top:466px;font:12.5px/14px 'Liberation Sans',sans-serif;color:#000;left:731px;transform:scaleX(0.9328);transform-origin:left top;">25</div>
<div class="t" id="t84" style="top:456px;font:12.5px/14px 'Liberation Sans',sans-serif;color:#000;left:385px;transform:scaleX(0.9328);transform-origin:left top;">1</div>
<div class="t" id="t85" style="top:527.5px;font:12.5px/14px 'Liberation Sans',sans-serif;color:#3e68a3;left:391px;transform:scaleX(0.9328);transform-origin:left top;">Kopf Zusatzinfo</div>
<div class="t" id="t86" style="top:527.5px;font:12.5px/14px 'Liberation Sans',sans-serif;color:#3e68a3;left:729px;transform:scaleX(0.8795);transform-origin:left top;">KBON20</div>
<div class="t" id="t87" style="top:543.5px;font:12.5px/14px 'Liberation Sans',sans-serif;color:#3e68a3;left:391px;transform:scaleX(0.9328);transform-origin:left top;">Kopfinfo</div>
<div class="t" id="t88" style="top:543.5px;font:12.5px/14px 'Liberation Sans',sans-serif;color:#3e68a3;left:729px;transform:scaleX(0.8795);transform-origin:left top;">KBON01</div>
<div class="t" id="t89" style="top:559.5px;font:12.5px/14px 'Liberation Sans',sans-serif;color:#3e68a3;left:391px;transform:scaleX(0.9328);transform-origin:left top;">Ausdruck Kundenanschrift</div>
<div class="t" id="t90" style="top:559.5px;font:12.5px/14px 'Liberation Sans',sans-serif;color:#3e68a3;left:729px;transform:scaleX(0.8795);transform-origin:left top;">KBON05</div>
<div class="t" id="t91" style="top:575.5px;font:12.5px/14px 'Liberation Sans',sans-serif;color:#3e68a3;left:391px;transform:scaleX(0.9328);transform-origin:left top;">Ausdruck Belegnotiz</div>
<div class="t" id="t92" style="top:575.5px;font:12.5px/14px 'Liberation Sans',sans-serif;color:#3e68a3;left:729px;transform:scaleX(0.8795);transform-origin:left top;">KBON38</div>
<div class="t" id="t93" style="top:591.5px;font:12.5px/14px 'Liberation Sans',sans-serif;color:#3e68a3;left:391px;transform:scaleX(0.9328);transform-origin:left top;">Trenner zu Postionen</div>
<div class="t" id="t94" style="top:591.5px;font:12.5px/14px 'Liberation Sans',sans-serif;color:#3e68a3;left:729px;transform:scaleX(0.8795);transform-origin:left top;">KBON03</div>
<div class="t" id="t95" style="top:607.5px;font:12.5px/14px 'Liberation Sans',sans-serif;color:#3e68a3;left:391px;transform:scaleX(0.9328);transform-origin:left top;">Überschrift Positionen</div>
<div class="t" id="t96" style="top:607.5px;font:12.5px/14px 'Liberation Sans',sans-serif;color:#3e68a3;left:729px;transform:scaleX(0.8795);transform-origin:left top;">KBON18</div>
<div class="t" id="t97" style="top:623.5px;font:12.5px/14px 'Liberation Sans',sans-serif;color:#3e68a3;left:391px;transform:scaleX(0.9328);transform-origin:left top;">Artikelzeile</div>
<div class="t" id="t98" style="top:623.5px;font:12.5px/14px 'Liberation Sans',sans-serif;color:#3e68a3;left:729px;transform:scaleX(0.8795);transform-origin:left top;">KBON02</div>
<div class="t" id="t99" style="top:639.5px;font:12.5px/14px 'Liberation Sans',sans-serif;color:#3e68a3;left:391px;transform:scaleX(0.9328);transform-origin:left top;">Artikelzeile Zusatzzeilen</div>
<div class="t" id="t100" style="top:639.5px;font:12.5px/14px 'Liberation Sans',sans-serif;color:#3e68a3;left:729px;transform:scaleX(0.8915);transform-origin:left top;">KBON02<span class="us">_</span>Z</div>
<div class="t" id="t101" style="top:655.5px;font:12.5px/14px 'Liberation Sans',sans-serif;color:#3e68a3;left:391px;transform:scaleX(0.9328);transform-origin:left top;">Artikelzeile 2 (Rabatt;Menge)</div>
<div class="t" id="t102" style="top:655.5px;font:12.5px/14px 'Liberation Sans',sans-serif;color:#3e68a3;left:729px;transform:scaleX(0.8795);transform-origin:left top;">KBON04</div>
<div class="t" id="t103" style="top:671.5px;font:12.5px/14px 'Liberation Sans',sans-serif;color:#3e68a3;left:391px;transform:scaleX(0.9328);transform-origin:left top;">Ausdruck Seriennummer zu einer Position</div>
<div class="t" id="t104" style="top:671.5px;font:12.5px/14px 'Liberation Sans',sans-serif;color:#3e68a3;left:729px;transform:scaleX(0.8795);transform-origin:left top;">KBON43</div>
<div class="t" id="t105" style="top:687.5px;font:12.5px/14px 'Liberation Sans',sans-serif;color:#3e68a3;left:391px;transform:scaleX(0.9328);transform-origin:left top;">Ausdruck Chargen zu einer Position</div>
<div class="t" id="t106" style="top:687.5px;font:12.5px/14px 'Liberation Sans',sans-serif;color:#3e68a3;left:729px;transform:scaleX(0.8795);transform-origin:left top;">KBON44</div>
<div class="t" id="t107" style="top:703.5px;font:12.5px/14px 'Liberation Sans',sans-serif;color:#3e68a3;left:391px;transform:scaleX(0.9328);transform-origin:left top;">Text (Z-Zeile)</div>
<div class="t" id="t108" style="top:703.5px;font:12.5px/14px 'Liberation Sans',sans-serif;color:#3e68a3;left:729px;transform:scaleX(0.8795);transform-origin:left top;">KBON26</div>
<div class="a" style="left:20px;top:711px;width:968px;height:20px;background:#fff"></div>

<div class="a" style="left:38px;top:482px;width:164px;height:36px;border:5px solid #e8161e"></div>
</body></html>
